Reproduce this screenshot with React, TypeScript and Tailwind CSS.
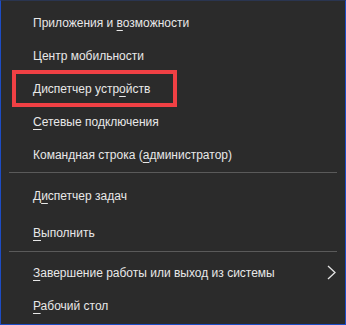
const rowText = "text-[12px] leading-none text-[#e8e8e8]";

function Row({ children, className = "" }: { children: React.ReactNode; className?: string }) {
  return (
    <div className={`flex h-[33px] items-center pl-[32px] pr-[10px] ${rowText} ${className}`}>
      {children}
    </div>
  );
}

function U({ children }: { children: React.ReactNode }) {
  return <span className="underline decoration-1 underline-offset-[3px]">{children}</span>;
}

function Separator({ className = "" }: { className?: string }) {
  return <div className={`mx-[8px] h-px bg-[#5a5a5a] ${className}`} />;
}

export default function App() {
  return (
    <div
      className="relative h-[325px] w-[346px] overflow-hidden border border-t-[#2a3550] border-x-[#1d4cc4] border-b-[#1d4cc4] bg-[#2b2b2b]"
      style={{ fontFamily: '"Liberation Sans", Arial, sans-serif' }}
    >
      <div className="pt-[5px]">
        <Row>
          <span>Приложения и <U>в</U>озможности</span>
        </Row>
        <Row>
          <span>Центр мобильности</span>
        </Row>
        <Row>
          <span>Диспетчер устр<U>о</U>йств</span>
        </Row>
        <Row>
          <span><U>С</U>етевые подключения</span>
        </Row>
        <Row>
          <span>Командная строка (<U>а</U>дминистратор)</span>
        </Row>
        <Separator className="mt-[1px]" />
        <Row className="mt-[6px]">
          <span>Д<U>и</U>спетчер задач</span>
        </Row>
        <Row className="mt-[4px]">
          <span><U>В</U>ыполнить</span>
        </Row>
        <Separator className="mt-[2px]" />
        <Row className="mt-[4px] justify-between">
          <span>
            <U>З</U>авершение работы или выход из системы
          </span>
          <svg width="9" height="15" viewBox="0 0 9 15" className="mr-[-1px] shrink-0">
            <polyline points="1,1 8,7.5 1,14" fill="none" stroke="#e4e4e4" strokeWidth="1.3" />
          </svg>
        </Row>
        <Row>
          <span><U>Р</U>абочий стол</span>
        </Row>
      </div>
      <div className="absolute left-[11px] top-[69px] h-[37px] w-[165px] border-[4px] border-[#f04044]" />
    </div>
  );
}
